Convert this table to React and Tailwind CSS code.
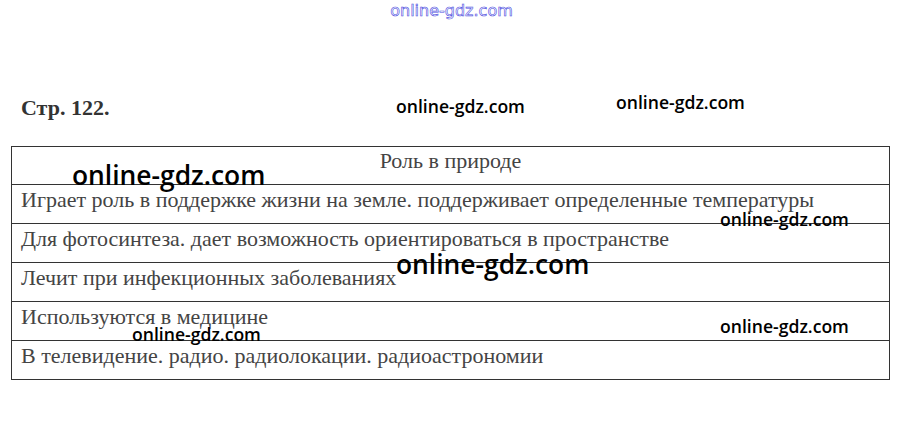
const rows = [
  'Играет роль в поддержке жизни на земле. поддерживает определенные температуры',
  'Для фотосинтеза. дает возможность ориентироваться в пространстве',
  'Лечит при инфекционных заболеваниях',
  'Используются в медицине',
  'В телевидение. радио. радиолокации. радиоастрономии',
];

// водяные знаки поверх страницы
const marks = [
  { cls: 'left-[396px] top-[98px] text-[17.6px]' },
  { cls: 'left-[616px] top-[94px] text-[17.6px]' },
  { cls: 'left-[72px] top-[162px] text-[26.4px]' },
  { cls: 'left-[720px] top-[211px] text-[17.6px]' },
  { cls: 'left-[396px] top-[251px] text-[26.4px]' },
  { cls: 'left-[132px] top-[326px] text-[17.6px]' },
  { cls: 'left-[720px] top-[318px] text-[17.6px]' },
];

export default function App() {
  return (
    <div className="relative w-[901px] h-[424px] bg-white overflow-hidden">
      <div className="flex justify-center pt-[1px] pl-[2px]">
        <span className="text-[16px] leading-[20px] text-white [-webkit-text-stroke:0.6px_#4a4ae0] font-['DejaVu_Sans',sans-serif]">
          online-gdz.com
        </span>
      </div>

      <div className="pl-[21px] pt-[74px] text-[22px] leading-[26px] font-bold text-[#333] font-['Liberation_Serif',serif]">
        Стр. 122.
      </div>

      <div className="ml-[11px] mt-[25px] w-[879px] border border-[#333] font-['Liberation_Serif',serif] text-[22px] leading-[26px] text-[#444]">
        <div className="h-[37px] flex justify-center pt-[1px]">Роль в природе</div>
        {rows.map((r) => (
          <div key={r} className="h-[39px] border-t border-[#333] pl-[9px] pt-[2px]">
            {r}
          </div>
        ))}
      </div>

      {marks.map((m, i) => (
        <span
          key={i}
          className={`absolute ${m.cls} font-['Open_Sans',sans-serif] font-semibold text-black leading-none`}
        >
          online-gdz.com
        </span>
      ))}
    </div>
  );
}
